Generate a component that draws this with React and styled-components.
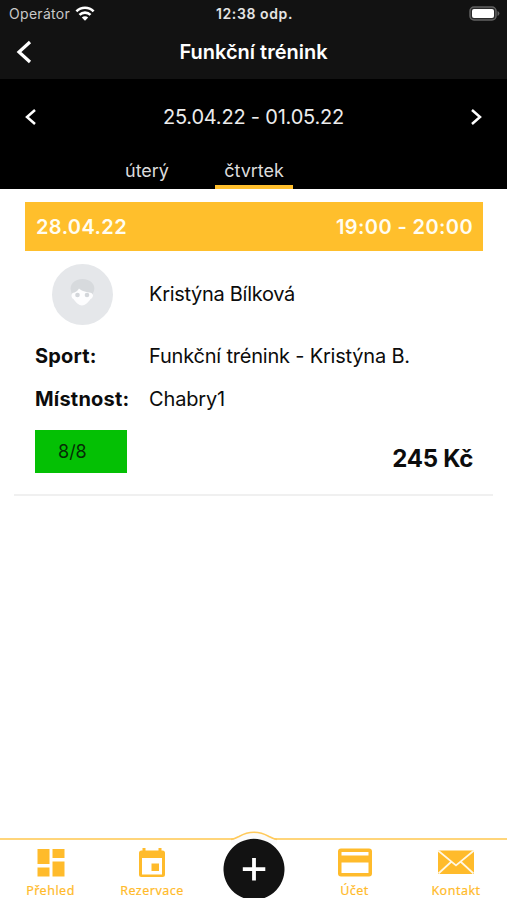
import React, { useState } from 'react';
import styled, { createGlobalStyle } from 'styled-components';

const GlobalStyle = createGlobalStyle`
  * {
    box-sizing: border-box;
  }

  body {
    margin: 0;
    background-color: white;
    font-family: Inter, 'Liberation Sans', sans-serif;
    color: #0c0c0c;
  }

  button {
    font: inherit;
    color: inherit;
    border: 0;
    padding: 0;
    background: none;
    cursor: pointer;
  }
`;

const Screen = styled.div`
  width: 100%;
  height: 900px;
  display: flex;
  flex-direction: column;
  overflow: hidden;
  white-space: nowrap;
`;

const StatusBar = styled.div`
  height: 27px;
  padding: 0 7px 0 9px;
  display: grid;
  grid-template-columns: 1fr auto 1fr;
  align-items: center;
  background-color: #121212;
  color: #e4e4e4;
  font-size: 14px;
`;

const Carrier = styled.div`
  display: flex;
  align-items: center;
  gap: 5px;
  color: #c9c9c9;
  letter-spacing: 0.3px;
`;

const Clock = styled.div`
  font-weight: 600;
  letter-spacing: 0.6px;
`;

const BatteryWrapper = styled.div`
  display: flex;
  justify-content: flex-end;
`;

const Header = styled.header`
  height: 52px;
  padding-bottom: 2px;
  display: grid;
  grid-template-columns: 60px 1fr 60px;
  align-items: center;
  background-color: #121212;
  color: white;
`;

const BackButton = styled.button`
  display: flex;
  padding-left: 16px;
`;

const Title = styled.h1`
  margin: 0;
  text-align: center;
  font-size: 20px;
  font-weight: 600;
`;

const WeekPanel = styled.div`
  height: 110px;
  background-color: black;
  color: #ececec;
`;

const WeekRow = styled.div`
  height: 75px;
  padding: 0 24px;
  display: flex;
  justify-content: space-between;
  align-items: center;
`;

const ArrowButton = styled.button`
  display: flex;
`;

const WeekRange = styled.div`
  font-size: 20px;
  letter-spacing: -0.2px;
`;

const Tabs = styled.div`
  height: 35px;
  display: flex;
  gap: 29px;
  padding-left: 108px;
`;

const Tab = styled.button`
  width: 78px;
  height: 35px;
  padding-top: 2px;
  font-size: 18px;
  letter-spacing: -0.05px;
  color: #dcdcdc;
  border-bottom: 4px solid ${(props) => (props.$active ? '#ffbf2c' : 'transparent')};
`;

const Content = styled.main`
  flex: 1;
  padding: 13px 14px 0;
`;

const Lesson = styled.article`
  height: 294px;
  padding: 0 10px 0 11px;
  border-bottom: 2px solid #f0f0f0;
`;

const LessonHeader = styled.div`
  height: 49px;
  padding: 1px 10px 0 11px;
  display: flex;
  justify-content: space-between;
  align-items: center;
  background-color: #ffbf2c;
  color: #fffdf2;
  font-size: 20px;
  font-weight: 600;
  letter-spacing: 0.4px;
`;

const DetailRow = styled.div`
  height: ${(props) => props.$height}px;
  padding-left: 10px;
  display: grid;
  grid-template-columns: 114px 1fr;
  align-items: center;
  font-size: 20px;
`;

const Label = styled.div`
  font-weight: 700;
  letter-spacing: 0.2px;
`;

const Value = styled.div`
  letter-spacing: ${(props) => props.$spacing || 0}px;
`;

const AvatarWrapper = styled.div`
  display: flex;
  padding-left: 17px;
`;

const LessonFooter = styled.div`
  padding: 7px 10px 0;
  display: flex;
  justify-content: space-between;
`;

const Capacity = styled.div`
  width: 92px;
  height: 43px;
  padding-left: 23px;
  line-height: 43px;
  background-color: #04c004;
  font-size: 18px;
  color: #062c06;
`;

const Price = styled.div`
  line-height: 57px;
  font-size: 24px;
  font-weight: 700;
  letter-spacing: -0.3px;
`;

const BottomBar = styled.nav`
  position: relative;
  height: 62px;
  display: grid;
  grid-template-columns: 101px 102px 101px 101px 102px;
  border-top: 2px solid #ffd57a;
  color: #ffbb2b;
`;

const NavItem = styled.button`
  grid-column: ${(props) => props.$column};
  display: flex;
  flex-direction: column;
  align-items: center;
  padding-top: 7px;
`;

const NavLabel = styled.span`
  margin-top: 4px;
  font-family: 'Noto Sans', sans-serif;
  font-size: 12.5px;
  line-height: 16px;
  font-weight: 400;
  letter-spacing: 0.5px;
  -webkit-text-stroke: 0.2px currentColor;
`;

// The add button rises over the top edge of the bar
const AddWrapper = styled.div`
  position: absolute;
  left: 50%;
  top: -10px;
  width: 62px;
  height: 70px;
  margin-left: -31px;
`;

function Chevron({ width, height, stroke, flip = false }) {
  return (
    <svg width={width} height={height} viewBox={`0 0 ${width} ${height}`} fill="none">
      <path
        d={`M${width - 2} 2L3 ${height / 2}L${width - 2} ${height - 2}`}
        stroke="white"
        strokeWidth={stroke}
        transform={flip ? `translate(${width} 0) scale(-1 1)` : undefined}
      />
    </svg>
  );
}

function WifiIcon() {
  return (
    <svg width="20" height="15" viewBox="0 0 20 15" fill="none" stroke="white" strokeWidth="2.6">
      <path d="M1.4 5.3a12.2 12.2 0 0 1 17.2 0" />
      <path d="M4.5 8.900a7.700 7.700 0 0 1 11 0" />
      <path d="M10 14.700L6.800 11.500a4.600 4.600 0 0 1 6.400 0z" fill="white" stroke="none" />
    </svg>
  );
}

function BatteryIcon() {
  return (
    <svg width="31" height="15" viewBox="0 0 31 15">
      <rect x="1" y="1" width="26" height="13" rx="4" fill="#2a2a2a" stroke="#626262" strokeWidth="1.5" />
      <rect x="3" y="3" width="22" height="9" rx="2" fill="white" />
      <path d="M28.5 5a2.6 2.6 0 0 1 0 5z" fill="#626262" />
    </svg>
  );
}

function Avatar() {
  return (
    <svg width="61" height="61" viewBox="0 0 61 61">
      <circle cx="30.5" cy="30.5" r="30.5" fill="#e5e7ea" />
      <path d="M19 27c-2-7 4-12 11.500-12s13.500 5 11.500 12l-2 4H20z" fill="#d7dadd" />
      <path
        d="M20.500 29c3-.5 5-2 6.500-4.500 2 2.500 7 3.500 12.500 4.500l1.500 2c0 2-1 3.500-2.500 4-2 3-5.500 6.500-8.500 6.500s-6.500-3.500-8.500-6.500c-1.500-.5-2-2-2-4z"
        fill="#fdfdfe"
      />
      <circle cx="25.500" cy="31" r="2.300" fill="#d3d6da" />
      <circle cx="35" cy="31" r="2.300" fill="#d3d6da" />
    </svg>
  );
}

function DashboardIcon() {
  return (
    <svg width="36" height="32" viewBox="0 0 36 32" fill="currentColor">
      <path d="M4.500 2h12v15h-12zM19.500 2h12v9h-12zM4.500 20.500h12v9h-12zM19.500 14.500h12v15h-12z" />
    </svg>
  );
}

function CalendarIcon() {
  return (
    <svg width="36" height="32" viewBox="0 0 36 32" fill="currentColor">
      <path
        fillRule="evenodd"
        d="M8.500 1h3v2.500h13V1h3v2.500h1a2.500 2.500 0 0 1 2.500 2.500v21.500a2.500 2.500 0 0 1-2.500 2.500h-21A2.500 2.500 0 0 1 5 27.500V6a2.500 2.500 0 0 1 2.500-2.500h1zM8 11v16.500h20V11z"
      />
      <path d="M17.500 16.500h7.500v7.500h-7.500z" />
    </svg>
  );
}

function CardIcon() {
  return (
    <svg width="36" height="32" viewBox="0 0 36 32" fill="currentColor">
      <path
        fillRule="evenodd"
        d="M4 1.500h28A3 3 0 0 1 35 4.500v22a3 3 0 0 1-3 3H4a3 3 0 0 1-3-3v-22a3 3 0 0 1 3-3zM4.500 5v3.500h27V5zM4.500 15.500V26h27V15.500z"
      />
    </svg>
  );
}

function MailIcon() {
  return (
    <svg width="38" height="32" viewBox="0 0 38 32" fill="none">
      <rect x="1" y="3.500" width="36" height="23.500" fill="currentColor" />
      <path d="M1 3.500L19 18.500L37 3.500M1.500 26.500L14 15M36.500 26.500L24 15" stroke="#fff8e5" strokeWidth="1.700" />
    </svg>
  );
}

function AddButton() {
  return (
    <AddWrapper>
      <svg width="62" height="70" viewBox="0 0 62 70" fill="none">
        <path d="M8 11Q13 8.500 16 6.500Q31-1.500 46 6.500Q49 8.500 54 11V14H8z" fill="#fbfbfb" />
        <path d="M8 9.500Q11 9 16 6.500Q31-2 46 6.500Q51 9 54 9.500" stroke="#ffca5c" strokeWidth="1.700" />
        <path d="M20.500 68A30.500 30.500 0 1 1 41.500 68z" fill="#121212" />
        <path d="M31 28v22.500M19.800 39.200h22.500" stroke="white" strokeWidth="3.800" />
      </svg>
    </AddWrapper>
  );
}

function App() {
  const [day, setDay] = useState('čtvrtek');

  return (
    <Screen>
      <GlobalStyle />
      <StatusBar>
        <Carrier>
          Operátor
          <WifiIcon />
        </Carrier>
        <Clock>12:38 odp.</Clock>
        <BatteryWrapper>
          <BatteryIcon />
        </BatteryWrapper>
      </StatusBar>
      <Header>
        <BackButton>
          <Chevron width={16} height={24} stroke={3.2} />
        </BackButton>
        <Title>Funkční trénink</Title>
      </Header>
      <WeekPanel>
        <WeekRow>
          <ArrowButton>
            <Chevron width={13} height={18} stroke={2.5} />
          </ArrowButton>
          <WeekRange>25.04.22 - 01.05.22</WeekRange>
          <ArrowButton>
            <Chevron width={13} height={18} stroke={2.5} flip />
          </ArrowButton>
        </WeekRow>
        <Tabs>
          {['úterý', 'čtvrtek'].map((name) => (
            <Tab key={name} $active={name === day} onClick={() => setDay(name)}>
              {name}
            </Tab>
          ))}
        </Tabs>
      </WeekPanel>
      <Content>
        <Lesson>
          <LessonHeader>
            <span>28.04.22</span>
            <span>19:00 - 20:00</span>
          </LessonHeader>
          <DetailRow $height={86}>
            <AvatarWrapper>
              <Avatar />
            </AvatarWrapper>
            <Value $spacing={-0.3}>Kristýna Bílková</Value>
          </DetailRow>
          <DetailRow $height={38}>
            <Label>Sport:</Label>
            <Value $spacing={-0.2}>Funkční trénink - Kristýna B.</Value>
          </DetailRow>
          <DetailRow $height={48}>
            <Label>Místnost:</Label>
            <Value $spacing={-0.15}>Chabry1</Value>
          </DetailRow>
          <LessonFooter>
            <Capacity>8/8</Capacity>
            <Price>245 Kč</Price>
          </LessonFooter>
        </Lesson>
      </Content>
      <BottomBar>
        <NavItem $column={1}>
          <DashboardIcon />
          <NavLabel>Přehled</NavLabel>
        </NavItem>
        <NavItem $column={2}>
          <CalendarIcon />
          <NavLabel>Rezervace</NavLabel>
        </NavItem>
        <AddButton />
        <NavItem $column={4}>
          <CardIcon />
          <NavLabel>Účet</NavLabel>
        </NavItem>
        <NavItem $column={5}>
          <MailIcon />
          <NavLabel>Kontakt</NavLabel>
        </NavItem>
      </BottomBar>
    </Screen>
  );
}

export default App;
